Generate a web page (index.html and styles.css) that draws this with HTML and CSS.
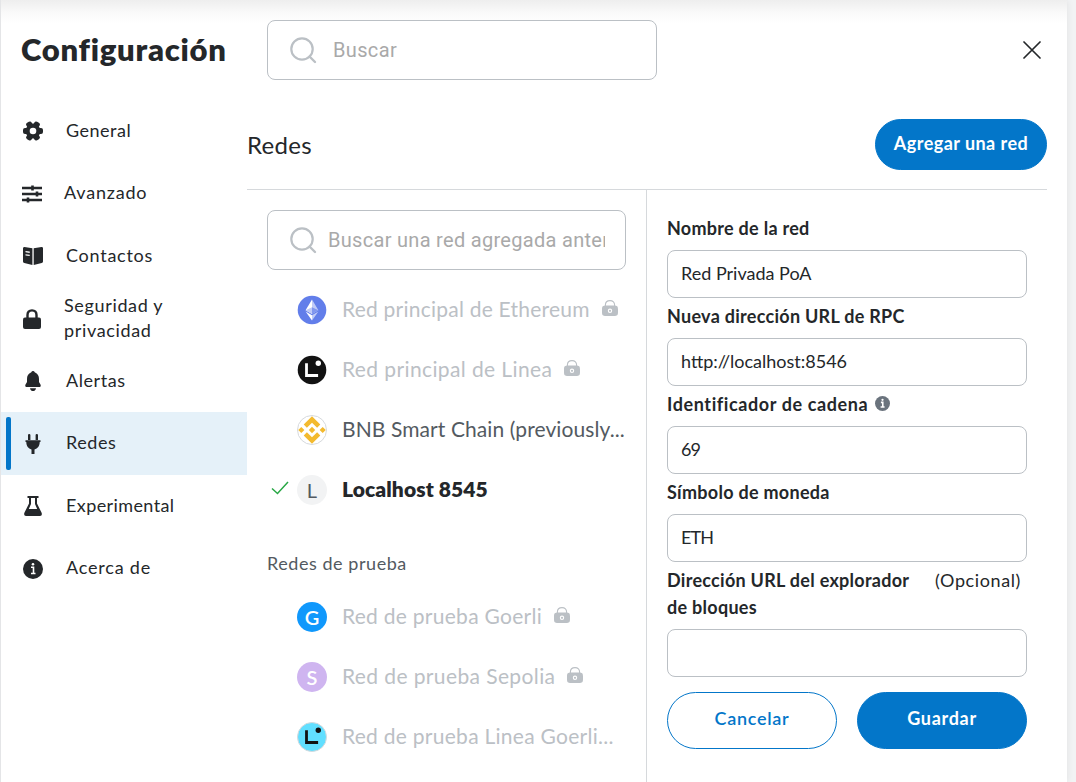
FILE: index.html
```html
<!DOCTYPE html>
<html lang="es">
<head>
<meta charset="utf-8">
<title>Configuración</title>
<link rel="stylesheet" href="styles.css">
</head>
<body>
<svg class="defs" width="0" height="0">
  <symbol id="search" viewBox="0 0 30 30"><circle cx="13" cy="13" r="10.7" fill="none" stroke="currentColor" stroke-width="2.2"/><path d="M20.5 20.5 26 26" stroke="currentColor" stroke-width="2.4" stroke-linecap="round"/></symbol>
  <symbol id="lock" viewBox="0 0 16 16"><path d="M3.4 6V5C3.400 2.500 5 .6 8 .6s4.600 1.900 4.600 4.400V6" fill="none" stroke="currentColor" stroke-width="1.100"/><path fill="currentColor" fill-rule="evenodd" d="M4 5.500h8c3.200 0 4 .8 4 4v2.500c0 3.200-.8 4-4 4H4c-3.200 0-4-.8-4-4V9.500c0-3.200.8-4 4-4zM8 8.600a2.200 2.200 0 1 0 0 4.400 2.200 2.200 0 0 0 0-4.400z"/><circle cx="8" cy="10.800" r="1.100" fill="currentColor"/></symbol>
</svg>
<div class="panel">
  <header class="top">
    <h1 class="title">Configuración</h1>
    <label class="search search-main"><svg class="search-icon"><use href="#search"/></svg><input class="search-input" placeholder="Buscar"></label>
    <svg class="close" viewBox="0 0 18 18"><path d="M1 1 17 17M17 1 1 17" stroke="#24272a" stroke-width="1.7" stroke-linecap="round"/></svg>
  </header>
  <div class="body">
    <nav class="side">
      <a class="tab"><svg class="tab-icon" viewBox="0 0 20 20"><g fill="currentColor"><rect x="0" y="7" width="20" height="6" rx="2"/><rect x="0" y="7" width="20" height="6" rx="2" transform="rotate(60 10 10)"/><rect x="0" y="7" width="20" height="6" rx="2" transform="rotate(120 10 10)"/><circle cx="10" cy="10" r="7.400"/></g><circle cx="10" cy="10" r="3.300" fill="#fff"/></svg><span class="tab-text t1">General</span></a>
      <a class="tab"><svg class="tab-icon narrow" viewBox="0 0 20 20"><path d="M0 4h20M0 10h20M0 16h20" stroke="currentColor" stroke-width="2.300"/><path d="M10.500 1.500v5M15 7.500v5M6 13.500v5" stroke="currentColor" stroke-width="2.600"/></svg><span class="tab-text t2">Avanzado</span></a>
      <a class="tab"><svg class="tab-icon" viewBox="0 0 20 20"><path fill="currentColor" fill-rule="evenodd" d="M9.400 2.200v16.800L1.300 17Q0 16.700 0 15.500V2.300Q.2.900 1.500 1zM2.500 5v1.300l4.200.6V5.600zm0 3.200v1.300l4.200.6V8.800zM10.700 2.200 18.500 1Q20 .9 20 2.300v13.200q0 1.200-1.300 1.500l-8 2z"/></svg><span class="tab-text t3">Contactos</span></a>
      <a class="tab"><svg class="tab-icon narrow" viewBox="0 0 20 20"><path d="M5.500 9V6q0-4.600 4.500-4.600T14.500 6v3" fill="none" stroke="currentColor" stroke-width="2.400"/><rect x="1" y="8.500" width="18" height="11.500" rx="2" fill="currentColor"/></svg><span class="tab-text t4">Seguridad y<br>privacidad</span></a>
      <a class="tab"><svg class="tab-icon" viewBox="0 0 20 20"><path fill="currentColor" d="M8.300 1.300a1.800 1.800 0 0 1 3.400 0C14.800 2.500 16 5 16 8v3l1.600 2.700q.7 2.300-1.600 2.300H4q-2.300 0-1.600-2.300L4 11V8c0-3 1.200-5.500 4.300-6.700zM7 17.200h6Q12.500 20 10 20t-3-2.800z"/></svg><span class="tab-text t5">Alertas</span></a>
      <a class="tab active"><svg class="tab-icon" viewBox="0 0 20 20"><path fill="currentColor" d="M5 1q0-1 1.200-1T7.400 1v5H5zM12.600 1q0-1 1.200-1T15 1v5h-2.400zM2.500 6.200h15v1.900h-.8c0 4-2.200 6.700-5.200 7.300V20h-3v-4.600c-3-.6-5.200-3.300-5.200-7.300h-.8z"/></svg><span class="tab-text t6">Redes</span></a>
      <a class="tab"><svg class="tab-icon" viewBox="0 0 20 20"><path fill="currentColor" fill-rule="evenodd" d="M4.500 0h11v2H14v5.500l4.600 9.300Q19.600 20 17 20H3q-2.600 0-1.600-3.200L6 7.500V2H4.500zM8 2v6l-2.200 5h8.400L12 8V2z"/></svg><span class="tab-text t7">Experimental</span></a>
      <a class="tab"><svg class="tab-icon" viewBox="0 0 20 20"><circle cx="10" cy="10" r="10" fill="currentColor"/><path d="M8 8.300h2.500v6M8 14.500h4.500" fill="none" stroke="#fff" stroke-width="1.600"/><circle cx="10" cy="5.300" r="1.300" fill="#fff"/></svg><span class="tab-text t8">Acerca de</span></a>
    </nav>
    <main class="main">
      <div class="sub"><h2 class="sub-title">Redes</h2><button class="btn primary add">Agregar una red</button></div>
      <div class="cols">
        <section class="list">
          <label class="search"><svg class="search-icon"><use href="#search"/></svg><input class="search-input tight" placeholder="Buscar una red agregada anteriormente"></label>
          <div class="rows">
            <div class="row"><span class="check"></span><svg class="coin" viewBox="0 0 30 30"><circle cx="15" cy="15" r="14.300" fill="#627eea"/><path d="M15 4.500 21.400 15.200 15 19z" fill="#c0cbf7"/><path d="M15 4.500 8.600 15.200 15 19z" fill="#fff"/><path d="M15 12.300 21.400 15.200 15 19z" fill="#8197ee"/><path d="M15 12.300 8.600 15.200 15 19z" fill="#c0cbf7"/><path d="M15 20.300 21.400 16.500 15 25.500z" fill="#c0cbf7"/><path d="M15 20.300 8.600 16.500 15 25.500z" fill="#fff"/></svg><span class="net n1">Red principal de Ethereum</span><svg class="lock"><use href="#lock"/></svg></div>
            <div class="row"><span class="check"></span><svg class="coin" viewBox="0 0 30 30"><circle cx="15" cy="15" r="14.300" fill="#121212"/><path d="M9.500 8.200v12.300h11.600" fill="none" stroke="#fff" stroke-width="2.800"/><circle cx="21.300" cy="8.300" r="2.700" fill="#fff"/></svg><span class="net n2">Red principal de Linea</span><svg class="lock"><use href="#lock"/></svg></div>
            <div class="row"><span class="check"></span><svg class="coin" viewBox="0 0 30 30"><circle cx="15" cy="15" r="14.500" fill="#fff" stroke="#d6d9dc"/><g fill="#f3ba2f"><path d="m15 1.300 8.300 8.300-3.200 3.200-5.100-5.100-5.100 5.100-3.200-3.200zM15 28.700l8.300-8.300-3.200-3.200-5.100 5.100-5.100-5.100-3.200 3.200zM15 11.800l3.200 3.200-3.200 3.200-3.200-3.200zM4.300 11.900l3.100 3.100-3.100 3.100L1.200 15zM25.700 11.900l3.100 3.100-3.100 3.100-3.100-3.100z"/></g></svg><span class="net mid n3">BNB Smart Chain (previously...</span></div>
            <div class="row"><span class="check"><svg class="tick" viewBox="0 0 18 14"><path d="m1 7.500 5.500 5L17 1" fill="none" stroke="#28a745" stroke-width="1.500"/></svg></span><span class="coin letter local">L</span><span class="net strong n4">Localhost 8545</span></div>
          </div>
          <h3 class="group">Redes de prueba</h3>
          <div class="rows">
            <div class="row"><span class="check"></span><span class="coin letter goerli">G</span><span class="net n5">Red de prueba Goerli</span><svg class="lock"><use href="#lock"/></svg></div>
            <div class="row"><span class="check"></span><span class="coin letter sepolia">S</span><span class="net n6">Red de prueba Sepolia</span><svg class="lock"><use href="#lock"/></svg></div>
            <div class="row"><span class="check"></span><svg class="coin" viewBox="0 0 30 30"><circle cx="15" cy="15" r="14.500" fill="#61dfff" stroke="#d6d9dc"/><path d="M9.500 8.200v12.300h11.600" fill="none" stroke="#121212" stroke-width="2.800"/><circle cx="21.300" cy="8.300" r="2.700" fill="#121212"/></svg><span class="net n7">Red de prueba Linea Goerli...</span></div>
          </div>
        </section>
        <form class="form">
          <div class="label"><span class="name">Nombre de la red</span></div>
          <input class="field" value="Red Privada PoA">
          <div class="label"><span class="name">Nueva dirección URL de RPC</span></div>
          <input class="field" value="http://localhost:8546">
          <div class="label"><span class="name wide">Identificador de cadena</span><svg class="info" viewBox="0 0 16 16"><circle cx="8" cy="8" r="8" fill="#6a737d"/><path d="M6.300 6.800h2v4.700M6 11.800h4.200" fill="none" stroke="#fff" stroke-width="1.700"/><circle cx="8" cy="4" r="1.200" fill="#fff"/></svg></div>
          <input class="field snug" value="69">
          <div class="label"><span class="name">Símbolo de moneda</span></div>
          <input class="field snug" value="ETH">
          <div class="label tall"><span class="name">Dirección URL del explorador<br>de bloques</span><span class="optional">(Opcional)</span></div>
          <input class="field">
          <div class="actions"><button type="button" class="btn outline">Cancelar</button><button type="button" class="btn primary">Guardar</button></div>
        </form>
      </div>
    </main>
  </div>
</div>
</body>
</html>
```
FILE: styles.css
```css
* { box-sizing: border-box; }
html, body { margin: 0; height: 782px; overflow: hidden; }
body { background: #f2f3f4; color: #24272a; font-family: Lato, "Open Sans", sans-serif; }
.defs { display: block; position: absolute; }
.panel { width: 1067px; height: 782px; background: linear-gradient(#eeeeee, #fafafa 13px, #fff 24px); border-left: 1px solid #e4e5e7; box-shadow: 0 0 7px rgba(0,0,0,.08); }
.top { height: 100px; display: flex; align-items: center; padding: 0 26px 0 20px; }
.title { margin: 0; padding-bottom: 2px; width: 246px; font-size: 31px; font-weight: 800; line-height: 40px; letter-spacing: .75px; white-space: nowrap; }
.search { display: flex; align-items: center; height: 60px; border: 1px solid #bbc0c5; border-radius: 8px; background: #fff; padding: 0 20px 0 21px; }
.search-main { width: 390px; }
.search-icon { width: 30px; height: 30px; margin-top: 1px; color: #bbc0c5; flex: none; }
.search-input { flex: 1; min-width: 0; margin: 0 0 0 14px; border: 0; padding: 0; outline: 0; background: none; font: 20px Roboto, sans-serif; letter-spacing: .35px; color: #24272a; }
.search-input.tight { margin-left: 9px; letter-spacing: .3px; }
.search-input::placeholder { color: #a9a9a9; opacity: 1; }
.close { width: 18px; height: 18px; margin-left: auto; }
.body { display: flex; height: 682px; }
.side { width: 246px; margin-top: -.5px; }
.tab { position: relative; display: flex; align-items: center; height: 62.5px; padding-left: 22px; gap: 23px; font-size: 18px; line-height: 25px; }
.tab-text { padding-bottom: .9px; }
.t1 { letter-spacing: .5px; }
.t2 { letter-spacing: .8px; }
.t3 { letter-spacing: .75px; }
.t4 { letter-spacing: .65px; }
.t5, .t6 { letter-spacing: .55px; }
.t7 { letter-spacing: .4px; }
.t8 { letter-spacing: .8px; }
.tab-icon { width: 20px; height: 20px; margin-top: 1px; flex: none; }
.tab-icon.narrow { margin-left: -1px; margin-right: -1px; }
.active { background: #e5f1f9; }
.active::before { content: ""; position: absolute; left: 5px; top: 5px; width: 5px; bottom: 5px; border-radius: 2px; background: #0376c9; }
.main { width: 800px; }
.sub { height: 90px; display: flex; align-items: center; justify-content: space-between; border-bottom: 1px solid #d6d9dc; }
.sub-title { margin: 0; padding-bottom: 1px; font-size: 24px; font-weight: 400; letter-spacing: .3px; }
.btn { font-family: inherit; font-size: 18px; font-weight: 700; letter-spacing: .7px; border: 1px solid #0376c9; border-radius: 30px; padding: 0 0 5px; cursor: pointer; }
.primary { background: #0376c9; color: #fff; }
.outline { background: #fff; color: #0376c9; font-weight: 600; }
.add { width: 172px; height: 51px; padding-bottom: 4px; letter-spacing: .45px; }
.cols { display: flex; height: 592px; }
.list { width: 400px; padding: 20px 20px 0; border-right: 1px solid #d6d9dc; }
.rows { padding-top: 10px; }
.row { display: flex; align-items: center; height: 60px; white-space: nowrap; }
.check { width: 30px; padding-left: 4px; flex: none; }
.tick { display: block; width: 18px; height: 14px; margin-bottom: 4px; }
.coin { width: 30px; height: 30px; flex: none; margin-right: 15px; }
.letter { display: flex; align-items: center; justify-content: center; border-radius: 50%; font-size: 20px; color: #fff; }
.local { background: #f2f3f4; color: #535a61; }
.goerli { background: #1098fc; font-weight: 600; }
.sepolia { background: #cfb5f0; font-weight: 600; }
.net { font-size: 21px; color: #bbc0c5; padding-bottom: 4px; }
.n1 { letter-spacing: .23px; }
.n5, .n7 { letter-spacing: .27px; }
.n2, .n6 { letter-spacing: .39px; }
.n3, .n4 { letter-spacing: .09px; }
.mid { color: #535a61; }
.strong { color: #24272a; font-weight: 800; }
.lock { width: 16px; height: 16px; color: #bbc0c5; margin: 0 0 4px 12px; }
.group { margin: 29px 0 0; height: 28px; font-size: 18px; line-height: 28px; font-weight: 400; letter-spacing: .55px; color: #535a61; }
.form { width: 400px; padding: 20px 20px 0; }
.label { display: flex; align-items: flex-start; height: 40px; padding-top: 5px; line-height: 27px; font-size: 18px; }
.label.tall { height: 67px; }
.name { font-weight: 700; white-space: nowrap; letter-spacing: .28px; }
.name.wide { letter-spacing: .6px; }
.info { width: 15px; height: 15px; margin: 5px 0 0 7px; }
.optional { margin-left: auto; margin-right: 6px; letter-spacing: .6px; }
.field { display: block; width: 360px; height: 48px; border: 1px solid #bbc0c5; border-radius: 8px; padding: 0 13px 2px; background: #fff; font: 18px Lato, sans-serif; color: #24272a; outline: 0; }
.snug { letter-spacing: -.9px; }
.actions { display: flex; gap: 20px; margin-top: 15px; }
.actions .btn { width: 170px; height: 57px; }
```
